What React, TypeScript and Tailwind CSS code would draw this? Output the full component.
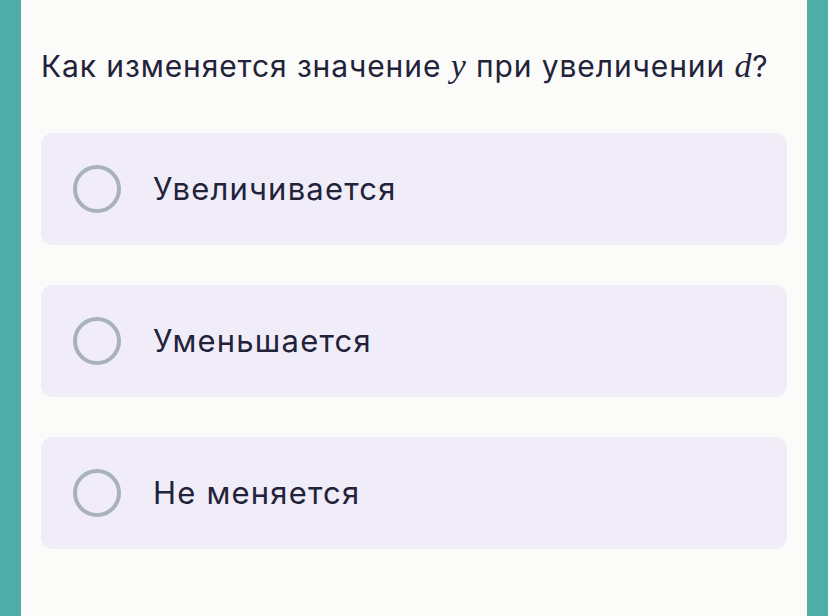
const options = ["Увеличивается", "Уменьшается", "Не меняется"];

export default function App() {
  return (
    <div className="flex min-h-[616px] bg-[#4fada7] px-[21px]">
      <div className="flex-1 bg-[#fbfbf9] px-5 pt-[46px] font-['Inter',sans-serif] text-[#22223a]">
        <p className="text-[30px] leading-[40px] tracking-[0.9px]">
          Как изменяется значение{" "}
          <span className="font-['Liberation_Serif',serif] text-[34px] italic">y</span> при увеличении{" "}
          <span className="font-['Liberation_Serif',serif] text-[34px] italic">d</span>?
        </p>
        <div className="mt-[47px] flex flex-col gap-10">
          {options.map((opt) => (
            <label
              key={opt}
              className="flex h-[112px] items-center rounded-xl bg-[#f0edf8] pl-8"
            >
              <span className="h-12 w-12 shrink-0 rounded-full border-4 border-[#a9b1ba]" />
              <span className="ml-8 text-[31px] tracking-[1.2px]">{opt}</span>
            </label>
          ))}
        </div>
      </div>
    </div>
  );
}
